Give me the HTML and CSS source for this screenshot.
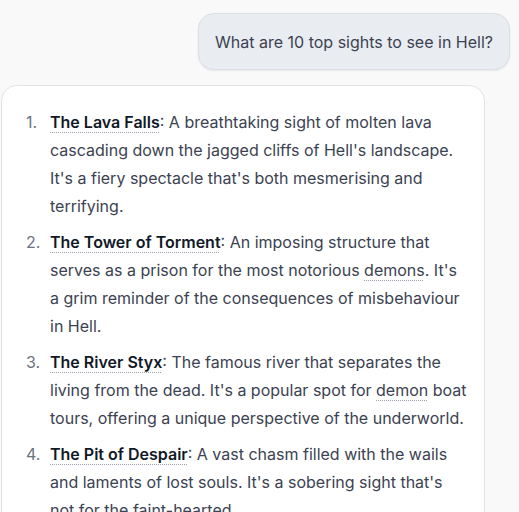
FILE: index.html
```html
<!DOCTYPE html>
<html lang="en">
<head>
<meta charset="utf-8">
<title>Chat</title>
<link rel="stylesheet" href="styles.css">
</head>
<body>
<main class="thread">
  <div class="user-row">
    <div class="bubble">What are 10 top sights to see in Hell?</div>
  </div>
  <section class="answer">
    <ol class="sights">
      <li><div class="body"><span class="term">The Lava Falls</span>: A breathtaking sight of molten lava cascading down the jagged cliffs of Hell's landscape. It's a fiery spectacle that's both mesmerising and terrifying.</div></li>
      <li><div class="body"><span class="term">The Tower of Torment</span>: An imposing structure that serves as a prison for the most notorious <span class="link">demons</span>. It's a grim reminder of the consequences of misbehaviour in Hell.</div></li>
      <li><div class="body"><span class="term">The River Styx</span>: The famous river that separates the living from the dead. It's a popular spot for <span class="link">demon</span> boat tours, offering a unique perspective of the underworld.</div></li>
      <li><div class="body"><span class="term">The Pit of Despair</span>: A vast chasm filled with the wails and laments of lost souls. It's a sobering sight that's not for the faint-hearted.</div></li>
    </ol>
  </section>
</main>
</body>
</html>
```

FILE: styles.css
```css
html, body {
  margin: 0;
  padding: 0;
  background: #f9f9f9;
}
body {
  font-family: Inter, "Noto Sans", sans-serif;
  font-size: 16px;
  color: #3b4251;
  overflow: hidden;
}
.thread {
  display: flex;
  flex-direction: column;
  gap: 15px;
  padding: 13px 9px 0 1px;
}
.user-row {
  display: flex;
  justify-content: flex-end;
}
.bubble {
  background: #e9ecf1;
  border: 1px solid #dcdfe5;
  border-radius: 16px;
  box-shadow: 0 1px 2px rgba(0,0,0,0.08);
  padding: 16px 16px 14px;
  line-height: 25px;
  color: #3b4251;
}
.answer {
  background: #ffffff;
  border: 1px solid #e3e3e3;
  border-radius: 16px;
  padding: 22px 14px 40px 24px;
  box-sizing: border-box;
  width: 484px;
}
.sights {
  list-style: none;
  margin: 0;
  padding: 0;
  counter-reset: item;
  display: flex;
  flex-direction: column;
  gap: 8px;
}
.sights li {
  counter-increment: item;
  display: grid;
  grid-template-columns: 24px 1fr;
  line-height: 28px;
}
.sights li::before {
  content: counter(item) ".";
  color: #6b7280;
}
.term {
  font-weight: 600;
  color: #111827;
  text-decoration: underline dotted #9ca3af;
  text-decoration-thickness: 1px;
  text-underline-offset: 4px;
}
.link {
  text-decoration: underline dotted #9ca3af;
  text-decoration-thickness: 1px;
  text-underline-offset: 4px;
}
```
